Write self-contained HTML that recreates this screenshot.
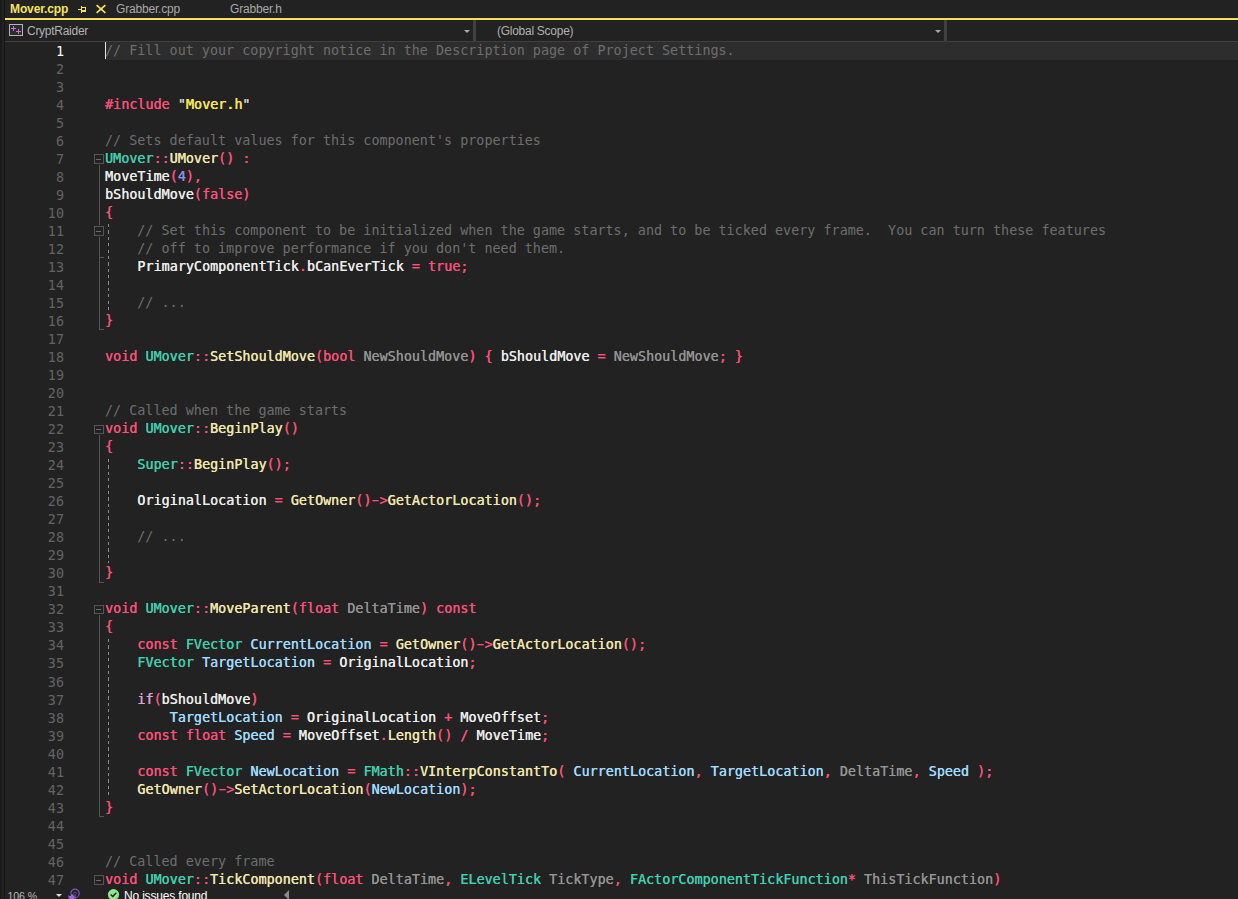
<!DOCTYPE html>
<html lang="en"><head><meta charset="utf-8"><title>Mover.cpp</title>
<style>
html,body{margin:0;padding:0;background:#222222;}
body{width:1238px;height:899px;position:relative;overflow:hidden;font-family:"Liberation Sans","DejaVu Sans",sans-serif;}
#strip{position:absolute;left:0;top:0;width:2px;height:899px;background:#1a1a1a;}
#strip2{position:absolute;left:4px;top:0;width:1px;height:899px;background:#151515;}
#tabs{position:absolute;left:5px;top:0;right:0;height:18px;font-size:12px;color:#a8a8a8;}
#tabs span{position:absolute;top:2px;line-height:15px;white-space:nowrap;letter-spacing:-0.18px;}
#tabs .act{color:#f7e35f;font-weight:bold;letter-spacing:-0.12px;}
#yl{position:absolute;left:5px;right:0;top:18px;height:2px;background:#f5e25c;}
#nav{position:absolute;left:5px;right:0;top:20px;height:21px;font-size:12px;color:#b0b0b0;}
#nav span{position:absolute;top:4px;line-height:15px;white-space:nowrap;letter-spacing:-0.27px;}
#nav .sep{position:absolute;top:0;width:3px;height:22px;background:#404040;}
#nav .arr{position:absolute;top:10px;width:0;height:0;border-left:3px solid transparent;border-right:3px solid transparent;border-top:3px solid #a8a8a8;}
#navl{position:absolute;left:5px;right:0;top:41px;height:1px;background:#404040;}
#ed{position:absolute;left:0;top:42px;width:1238px;height:846px;overflow:hidden;}
.ln{position:absolute;left:0;width:1238px;height:18px;line-height:18px;white-space:pre;font-family:"DejaVu Sans Mono","Liberation Mono",monospace;font-size:13.4px;letter-spacing:0.011px;color:#dcdcdc;}
.ln .no{position:absolute;left:0;top:1px;width:64px;text-align:right;color:#646464;}
.ln.cur .no{color:#ffffff;}
.ln .code{position:absolute;left:105px;top:0;height:18px;}
.ln.cur .code{right:0;background:#2d2d2d;}
.ln.cur .code:before{content:"";position:absolute;left:0;top:0;width:1px;height:17px;background:#e4e4e4;}
.code span{text-shadow:0.3px 0 0 currentColor;}
.code .c{color:#6e6e6e;text-shadow:none;}
.code .p{color:#949494;text-shadow:0.15px 0 0 currentColor;}
.k{color:#fa5079;}
.o{color:#fa5079;}
.i{color:#e0a0dc;}
.h{display:inline-block;transform:scaleX(1.7);}
.t{color:#40cfb0;}
.f{color:#f1e7ad;}
.v{color:#ececec;}
.l{color:#a0dcff;}
.n{color:#8e8eea;}
.s{color:#fbe75a;}
.code .s{text-shadow:0.55px 0 0 currentColor;}
.q{color:#d4d4d4;}
.box{position:absolute;left:94px;width:8px;border:1px solid #555;background:#222222;}
.box i{position:absolute;left:1px;width:5px;height:1px;background:#6c6c6c;}
.vl{position:absolute;width:1px;background:#555;}
.dl{position:absolute;width:1px;background:repeating-linear-gradient(to bottom,#8a8a8a 0,#8a8a8a 3.3px,transparent 3.3px,transparent 6.38px);}
.tk{position:absolute;left:99px;width:5px;height:1px;background:#555;}
#bot{position:absolute;left:5px;right:0;top:887px;height:12px;background:#222222;font-size:12px;color:#ffffff;overflow:hidden;}
#bot span{position:absolute;top:2px;line-height:15px;white-space:nowrap;letter-spacing:-0.18px;}
</style></head><body>
<div id="strip"></div><div id="strip2"></div>
<div id="tabs">
<span class="act" style="left:5px">Mover.cpp</span>
<svg style="position:absolute;left:70px;top:0" width="36" height="18" viewBox="0 0 36 18" shape-rendering="crispEdges"><g fill="#f7e35f"><rect x="3" y="9" width="3" height="1"/><rect x="6" y="6" width="1" height="7"/><rect x="7" y="7" width="4" height="1"/><rect x="10" y="7" width="1" height="5"/><rect x="7" y="10" width="4" height="2"/></g></svg>
<svg style="position:absolute;left:90px;top:0" width="16" height="18" viewBox="0 0 16 18"><path d="M1.6 5.2L10.4 12.8M10.4 5.2L1.6 12.8" fill="none" stroke="#f7e35f" stroke-width="1.7"/></svg>
<span style="left:111px">Grabber.cpp</span>
<span style="left:225px">Grabber.h</span>
</div>
<div id="yl"></div>
<div id="nav">
<svg style="position:absolute;left:4px;top:4px" width="15" height="13" viewBox="0 0 15 13" shape-rendering="crispEdges"><rect x="0.5" y="0.5" width="13" height="11" fill="#2d2d2d" stroke="#b4b4b4"/><g fill="#cc6fe0"><rect x="2" y="4" width="5" height="1"/><rect x="4" y="2" width="1" height="5"/><rect x="7" y="7" width="5" height="1"/><rect x="9" y="5" width="1" height="5"/></g></svg>
<span style="left:22px">CryptRaider</span>
<div class="arr" style="left:459px"></div>
<div class="sep" style="left:468px"></div>
<span style="left:492px">(Global Scope)</span>
<div class="arr" style="left:930px"></div>
<div class="sep" style="left:939px"></div>
</div>
<div id="navl"></div>
<div id="ed">
<div class="ln cur" style="top:0px"><span class="no">1</span><span class="code"><span class="c">// Fill out your copyright notice in the Description page of Project Settings.</span></span></div>
<div class="ln" style="top:18px"><span class="no">2</span><span class="code"></span></div>
<div class="ln" style="top:36px"><span class="no">3</span><span class="code"></span></div>
<div class="ln" style="top:54px"><span class="no">4</span><span class="code"><span class="k">#include</span> <span class="q">"</span><span class="s">Mover.h</span><span class="q">"</span></span></div>
<div class="ln" style="top:72px"><span class="no">5</span><span class="code"></span></div>
<div class="ln" style="top:90px"><span class="no">6</span><span class="code"><span class="c">// Sets default values for this component's properties</span></span></div>
<div class="ln" style="top:108px"><span class="no">7</span><span class="code"><span class="t">UMover</span><span class="o">::</span><span class="f">UMover</span><span class="o">()</span> <span class="o">:</span></span></div>
<div class="ln" style="top:126px"><span class="no">8</span><span class="code"><span class="v">MoveTime</span><span class="o">(</span><span class="n">4</span><span class="o">),</span></span></div>
<div class="ln" style="top:144px"><span class="no">9</span><span class="code"><span class="v">bShouldMove</span><span class="o">(</span><span class="k">false</span><span class="o">)</span></span></div>
<div class="ln" style="top:162px"><span class="no">10</span><span class="code"><span class="o">{</span></span></div>
<div class="ln" style="top:180px"><span class="no">11</span><span class="code">    <span class="c">// Set this component to be initialized when the game starts, and to be ticked every frame.  You can turn these features</span></span></div>
<div class="ln" style="top:198px"><span class="no">12</span><span class="code">    <span class="c">// off to improve performance if you don't need them.</span></span></div>
<div class="ln" style="top:216px"><span class="no">13</span><span class="code">    <span class="v">PrimaryComponentTick</span><span class="o">.</span><span class="v">bCanEverTick</span> <span class="o">=</span> <span class="k">true</span><span class="o">;</span></span></div>
<div class="ln" style="top:234px"><span class="no">14</span><span class="code"></span></div>
<div class="ln" style="top:252px"><span class="no">15</span><span class="code">    <span class="c">// ...</span></span></div>
<div class="ln" style="top:270px"><span class="no">16</span><span class="code"><span class="o">}</span></span></div>
<div class="ln" style="top:288px"><span class="no">17</span><span class="code"></span></div>
<div class="ln" style="top:306px"><span class="no">18</span><span class="code"><span class="k">void</span> <span class="t">UMover</span><span class="o">::</span><span class="f">SetShouldMove</span><span class="o">(</span><span class="k">bool</span> <span class="p">NewShouldMove</span><span class="o">)</span> <span class="o">{</span> <span class="v">bShouldMove</span> <span class="o">=</span> <span class="p">NewShouldMove</span><span class="o">;</span> <span class="o">}</span></span></div>
<div class="ln" style="top:324px"><span class="no">19</span><span class="code"></span></div>
<div class="ln" style="top:342px"><span class="no">20</span><span class="code"></span></div>
<div class="ln" style="top:360px"><span class="no">21</span><span class="code"><span class="c">// Called when the game starts</span></span></div>
<div class="ln" style="top:378px"><span class="no">22</span><span class="code"><span class="k">void</span> <span class="t">UMover</span><span class="o">::</span><span class="f">BeginPlay</span><span class="o">()</span></span></div>
<div class="ln" style="top:396px"><span class="no">23</span><span class="code"><span class="o">{</span></span></div>
<div class="ln" style="top:414px"><span class="no">24</span><span class="code">    <span class="t">Super</span><span class="o">::</span><span class="f">BeginPlay</span><span class="o">();</span></span></div>
<div class="ln" style="top:432px"><span class="no">25</span><span class="code"></span></div>
<div class="ln" style="top:450px"><span class="no">26</span><span class="code">    <span class="v">OriginalLocation</span> <span class="o">=</span> <span class="f">GetOwner</span><span class="o">()</span><span class="o h">-</span><span class="o">&gt;</span><span class="f">GetActorLocation</span><span class="o">();</span></span></div>
<div class="ln" style="top:468px"><span class="no">27</span><span class="code"></span></div>
<div class="ln" style="top:486px"><span class="no">28</span><span class="code">    <span class="c">// ...</span></span></div>
<div class="ln" style="top:504px"><span class="no">29</span><span class="code"></span></div>
<div class="ln" style="top:522px"><span class="no">30</span><span class="code"><span class="o">}</span></span></div>
<div class="ln" style="top:540px"><span class="no">31</span><span class="code"></span></div>
<div class="ln" style="top:558px"><span class="no">32</span><span class="code"><span class="k">void</span> <span class="t">UMover</span><span class="o">::</span><span class="f">MoveParent</span><span class="o">(</span><span class="k">float</span> <span class="p">DeltaTime</span><span class="o">)</span> <span class="k">const</span></span></div>
<div class="ln" style="top:576px"><span class="no">33</span><span class="code"><span class="o">{</span></span></div>
<div class="ln" style="top:594px"><span class="no">34</span><span class="code">    <span class="k">const</span> <span class="t">FVector</span> <span class="l">CurrentLocation</span> <span class="o">=</span> <span class="f">GetOwner</span><span class="o">()</span><span class="o h">-</span><span class="o">&gt;</span><span class="f">GetActorLocation</span><span class="o">();</span></span></div>
<div class="ln" style="top:612px"><span class="no">35</span><span class="code">    <span class="t">FVector</span> <span class="l">TargetLocation</span> <span class="o">=</span> <span class="v">OriginalLocation</span><span class="o">;</span></span></div>
<div class="ln" style="top:631px"><span class="no">36</span><span class="code"></span></div>
<div class="ln" style="top:649px"><span class="no">37</span><span class="code">    <span class="i">if</span><span class="o">(</span><span class="v">bShouldMove</span><span class="o">)</span></span></div>
<div class="ln" style="top:667px"><span class="no">38</span><span class="code">        <span class="l">TargetLocation</span> <span class="o">=</span> <span class="v">OriginalLocation</span> <span class="o">+</span> <span class="v">MoveOffset</span><span class="o">;</span></span></div>
<div class="ln" style="top:685px"><span class="no">39</span><span class="code">    <span class="k">const</span> <span class="k">float</span> <span class="l">Speed</span> <span class="o">=</span> <span class="v">MoveOffset</span><span class="o">.</span><span class="f">Length</span><span class="o">()</span> <span class="o">/</span> <span class="v">MoveTime</span><span class="o">;</span></span></div>
<div class="ln" style="top:703px"><span class="no">40</span><span class="code"></span></div>
<div class="ln" style="top:721px"><span class="no">41</span><span class="code">    <span class="k">const</span> <span class="t">FVector</span> <span class="l">NewLocation</span> <span class="o">=</span> <span class="t">FMath</span><span class="o">::</span><span class="f">VInterpConstantTo</span><span class="o">(</span> <span class="l">CurrentLocation</span><span class="o">,</span> <span class="l">TargetLocation</span><span class="o">,</span> <span class="p">DeltaTime</span><span class="o">,</span> <span class="l">Speed</span> <span class="o">);</span></span></div>
<div class="ln" style="top:739px"><span class="no">42</span><span class="code">    <span class="f">GetOwner</span><span class="o">()</span><span class="o h">-</span><span class="o">&gt;</span><span class="f">SetActorLocation</span><span class="o">(</span><span class="l">NewLocation</span><span class="o">);</span></span></div>
<div class="ln" style="top:757px"><span class="no">43</span><span class="code"><span class="o">}</span></span></div>
<div class="ln" style="top:775px"><span class="no">44</span><span class="code"></span></div>
<div class="ln" style="top:793px"><span class="no">45</span><span class="code"></span></div>
<div class="ln" style="top:811px"><span class="no">46</span><span class="code"><span class="c">// Called every frame</span></span></div>
<div class="ln" style="top:829px"><span class="no">47</span><span class="code"><span class="k">void</span> <span class="t">UMover</span><span class="o">::</span><span class="f">TickComponent</span><span class="o">(</span><span class="k">float</span> <span class="p">DeltaTime</span><span class="o">,</span> <span class="t">ELevelTick</span> <span class="p">TickType</span><span class="o">,</span> <span class="t">FActorComponentTickFunction</span><span class="o">*</span> <span class="p">ThisTickFunction</span><span class="o">)</span></span></div>
</div>
<div class="box" style="top:154px;height:8px"><i style="top:4px"></i></div>
<div class="box" style="top:226px;height:8px"><i style="top:4px"></i></div>
<div class="vl" style="left:99px;top:165px;height:60px"></div>
<div class="tk" style="top:257px"></div>
<div class="tk" style="top:329px"></div>
<div class="vl" style="left:99px;top:237px;height:93px"></div>
<div class="dl" style="left:108px;top:224px;height:87px"></div>
<div class="box" style="top:425px;height:7px"><i style="top:3px"></i></div>
<div class="tk" style="top:582px"></div>
<div class="vl" style="left:99px;top:435px;height:148px"></div>
<div class="dl" style="left:108px;top:459px;height:104px"></div>
<div class="box" style="top:605px;height:7px"><i style="top:3px"></i></div>
<div class="tk" style="top:816px"></div>
<div class="vl" style="left:99px;top:615px;height:202px"></div>
<div class="dl" style="left:108px;top:639px;height:158px"></div>
<div class="box" style="top:875px;height:8px"><i style="top:4px"></i></div>
<div id="bot">
<span style="left:2.5px;color:#b8b8b8;font-size:10.6px;letter-spacing:-0.1px;top:1.5px">106 %</span>
<div style="position:absolute;left:51px;top:7px;width:0;height:0;border-left:3px solid transparent;border-right:3px solid transparent;border-top:3.5px solid #e0e0e0"></div>
<svg style="position:absolute;left:62px;top:0" width="20" height="12" viewBox="0 0 20 12"><circle cx="8" cy="6.4" r="4.2" fill="none" stroke="#7d55b6" stroke-width="1.2"/><path d="M5.9 6.4Q8 3.8 10.1 6.4M6.8 6.6h0.1M9.1 6.6h0.1" fill="none" stroke="#6a4a98" stroke-width="1"/><path d="M8 7.6V12" stroke="#7d55b6" stroke-width="1.3"/><path d="M1.3 7.4Q1.4 9.6 3.9 8.9L3.6 7L6.2 7.6L7.2 10L7.4 12H2.6Q0.4 10.2 1.3 7.4Z" fill="#9c64e0"/><circle cx="2.9" cy="7.7" r="0.9" fill="#222222"/></svg>
<svg style="position:absolute;left:102px;top:0" width="14" height="12" viewBox="0 0 14 12"><circle cx="6.5" cy="7.6" r="5.6" fill="#8fe78f"/><path d="M3.7 7.4L5.8 9.4L9.3 5.8" stroke="#222222" stroke-width="1.4" fill="none"/></svg>
<span style="left:119px">No issues found</span>
<div style="position:absolute;left:279px;top:3px;width:0;height:0;border-top:5px solid transparent;border-bottom:5px solid transparent;border-right:5px solid #8a8a8a"></div>
</div>
</body></html>
